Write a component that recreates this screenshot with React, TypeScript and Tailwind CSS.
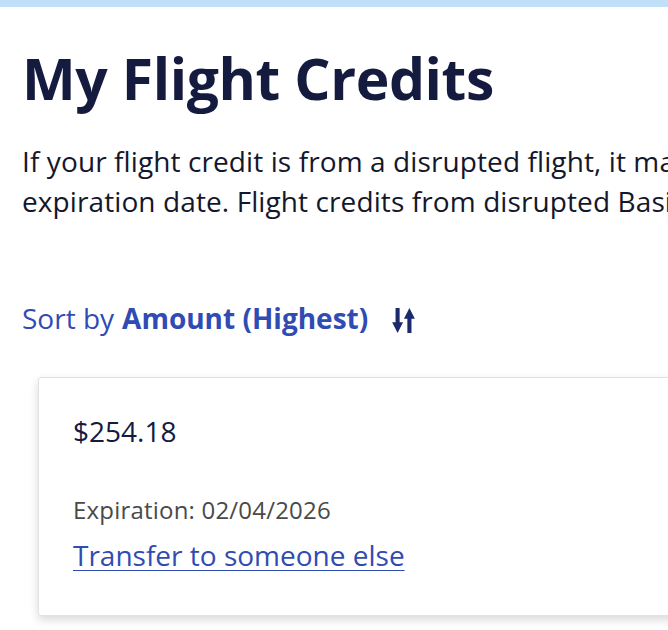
export default function App() {
  return (
    <div className="h-[630px] w-[668px] overflow-hidden bg-white font-['Open_Sans',sans-serif]">
      <div className="h-[7px] bg-[#bfe0f8]" />
      <div className="w-[1200px] pl-[22px] pt-[39px]">
        <h1 className="text-[57px] font-bold leading-[64px] tracking-[-0.4px] text-[#141b3f]">
          My Flight Credits
        </h1>
        <p className="mt-[31px] text-[28px] leading-[40px] tracking-[0.1px] text-[#14172b]">
          If your flight credit is from a disrupted flight, it may have a different
          <br />
          expiration date. Flight credits from disrupted Basic fares do not expire.
        </p>
        <div className="mt-[77px] flex h-[40px] items-center text-[28px] leading-[40px] text-[#304cb2]">
          <span>Sort by</span>
          <span className="ml-[8px] font-bold">Amount (Highest)</span>
          <svg
            className="ml-[24px] mt-[4px]"
            width="23"
            height="25"
            viewBox="0 0 20 22"
            fill="#1a2a6b"
          >
            <path d="M3 0h3.6v12.5H9.6L4.8 22L0 12.5h3z" />
            <path d="M13.4 22h3.6V9.5h3L15.2 0l-4.8 9.5h3z" />
          </svg>
        </div>
        <div className="mt-[39px] ml-[16px] h-[239px] rounded-[3px] border border-[#e2e2e2] bg-white px-[34px] pt-[35px] shadow-[0_4px_10px_rgba(0,0,0,0.15)]">
          <div className="text-[28px] leading-[36px] text-[#141b3f]">$254.18</div>
          <div className="mt-[45px] text-[24px] leading-[32px] tracking-[0.2px] text-[#4a4a4a]">
            Expiration: 02/04/2026
          </div>
          <a
            href="#"
            className="mt-[11px] block text-[28px] leading-[36px] text-[#304cb2] underline decoration-1 underline-offset-[4px]"
          >
            Transfer to someone else
          </a>
        </div>
      </div>
    </div>
  );
}
